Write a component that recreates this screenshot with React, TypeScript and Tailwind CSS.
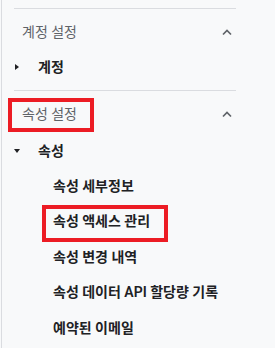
import React from "react";

const font = { fontFamily: 'Roboto, "Noto Sans CJK KR", sans-serif' };

function Chevron() {
  return (
    <svg width="10" height="7" viewBox="0 0 10 7" className="block">
      <path d="M1 5.5 L5 1.5 L9 5.5" fill="none" stroke="#5f6368" strokeWidth="1.7" />
    </svg>
  );
}

function Header({ label }: { label: string }) {
  return (
    <div className="flex h-[46px] items-center justify-between pl-2 pr-1">
      <span className="text-[14px] leading-5 text-[#5f6368]">{label}</span>
      <Chevron />
    </div>
  );
}

const subItems = [
  "속성 세부정보",
  "속성 액세스 관리",
  "속성 변경 내역",
  "속성 데이터 API 할당량 기록",
  "예약된 이메일",
];

export default function App() {
  return (
    <div className="relative h-[348px] w-[275px] overflow-hidden bg-[#f8f9fa]" style={font}>
      <div className="ml-px h-full border-l border-[#dadce0] pl-[12px] pt-2">
        <div className="w-[222px]">
          <div className="h-px bg-[#dadce0]" />
          <Header label="계정 설정" />
          <div className="-mt-[2px] flex h-[28px] items-center">
            <div className="w-[24px] pl-px">
              <svg width="4" height="6" viewBox="0 0 4 6" className="block">
                <path d="M0 0 L4 3 L0 6 Z" fill="#202124" />
              </svg>
            </div>
            <span className="text-[14px] font-bold leading-5 text-[#202124]">계정</span>
          </div>
          <div className="mt-[9px] h-px bg-[#dadce0]" />
          <Header label="속성 설정" />
          <div className="flex h-[28px] items-center">
            <div className="w-[24px]">
              <svg width="6" height="4" viewBox="0 0 6 4" className="block">
                <path d="M0 0 L6 0 L3 4 Z" fill="#202124" />
              </svg>
            </div>
            <span className="text-[14px] font-bold leading-5 text-[#202124]">속성</span>
          </div>
          <div className="mt-[3px] flex flex-col">
            {subItems.map((s) => (
              <div key={s} className="flex h-[35.5px] items-center pl-[39px]">
                <span className="text-[14px] font-semibold leading-5 text-[#202124]">{s}</span>
              </div>
            ))}
          </div>
        </div>
      </div>
      <div className="absolute left-[8px] top-[98px] h-[34px] w-[86px] border-4 border-[#ec1c24]" />
      <div className="absolute left-[42px] top-[205px] h-[37px] w-[126px] border-4 border-[#ec1c24]" />
    </div>
  );
}
